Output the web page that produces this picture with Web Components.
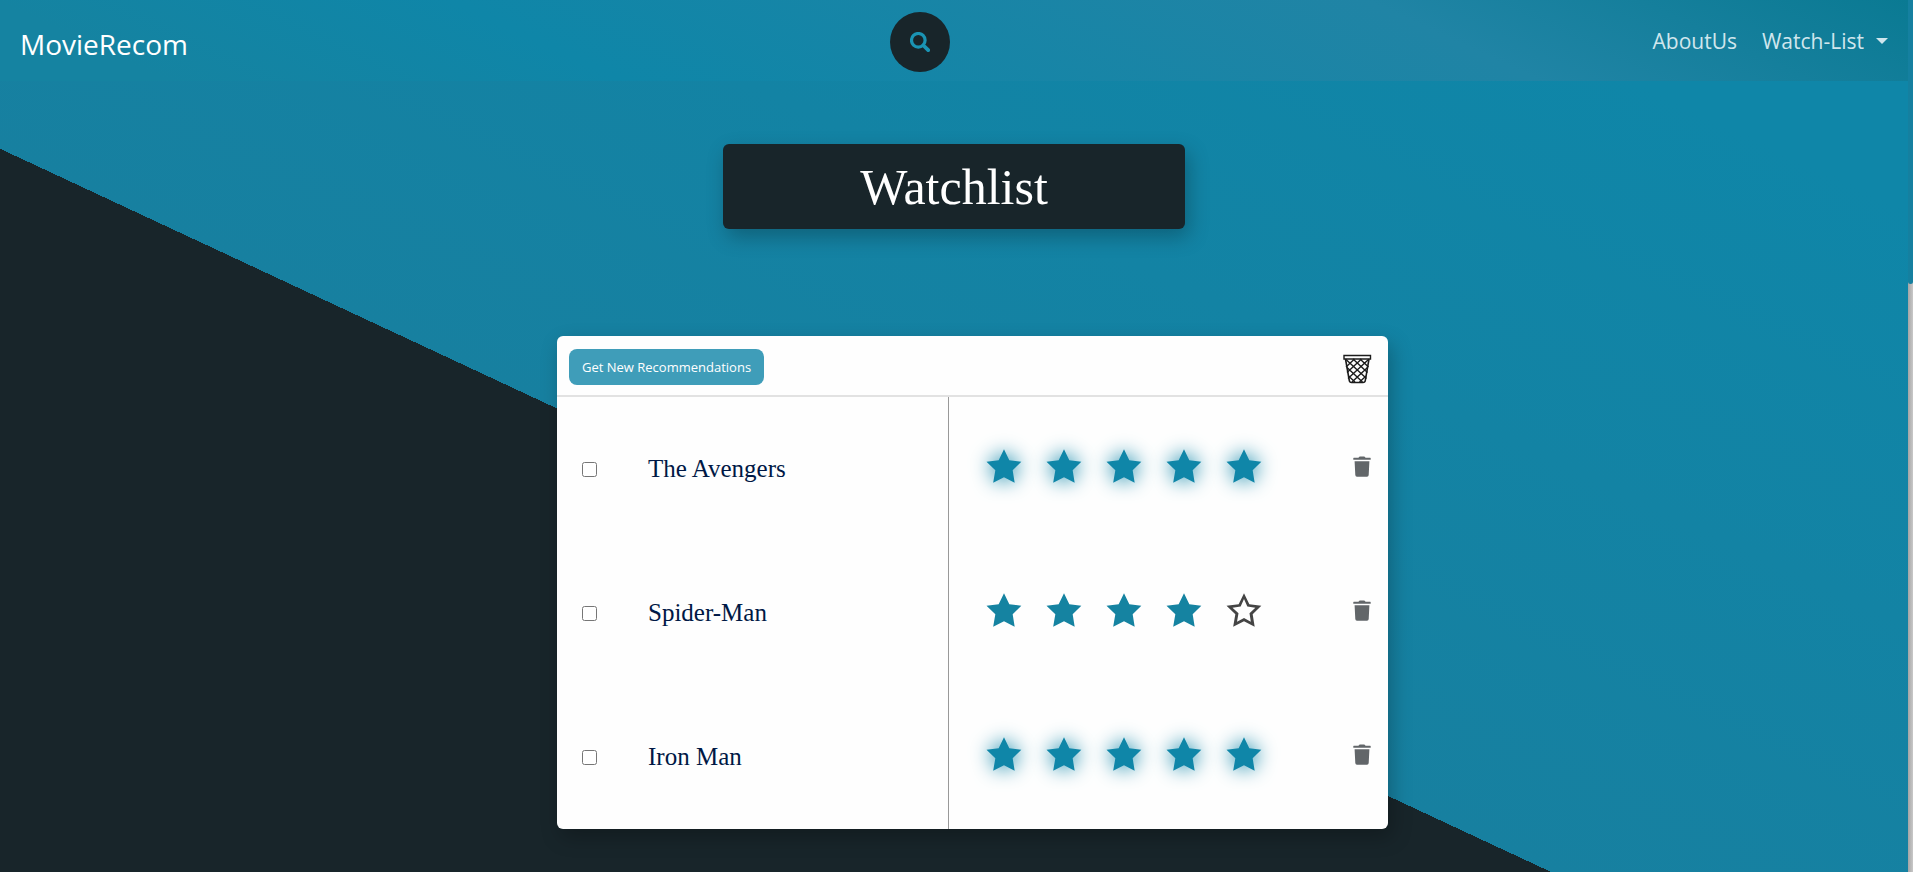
<!DOCTYPE html>
<html lang="en">
<head>
<meta charset="utf-8">
<meta name="viewport" content="width=device-width, initial-scale=1">
<title>MovieRecom - Watchlist</title>
<style>
  html, body { margin: 0; height: 100%; }
  body { font-family: "Open Sans", "Noto Sans", sans-serif; overflow: hidden; }
</style>
</head>
<body>
<movie-app>
  <movie-nav slot="nav"></movie-nav>
  <page-title>Watchlist</page-title>
  <watch-card></watch-card>
</movie-app>

<script>
const define = (name, html, setup) => customElements.define(name, class extends HTMLElement {
  connectedCallback() {
    if (this.shadowRoot) return;
    const t = document.createElement('template');
    t.innerHTML = html;
    const root = this.attachShadow({ mode: 'open' });
    root.append(t.content.cloneNode(true));
    if (setup) setup(this, root);
  }
});

define('movie-app', `
<style>
  :host { display: grid; grid-template-columns: minmax(0, 1fr) 5px; height: 100vh;
    background: linear-gradient(25deg, #18252a 41%, #1780a0 41%, #0f86a8 88%, #0f86a8 100%); }
  .page { min-width: 0; }
  main { display: flex; flex-direction: column; align-items: center; gap: 107px; padding: 63px 20px 40px; }
  .track { background: linear-gradient(90deg, #a5a5a5, #c8c8c8); }
  .thumb { height: 284px; border-radius: 0 0 4px 4px; background: #1580a0; }
</style>
<div class="page">
  <slot name="nav"></slot>
  <main><slot></slot></main>
</div>
<div class="track"><div class="thumb"></div></div>`);

define('movie-nav', `
<style>
  :host { display: block; background: linear-gradient(25deg, #1583a1 0%, #1583a1 8%, #0f86a8 30%, #2084a5 74%, #0a7a93 100%); }
  nav { display: flex; justify-content: space-between; align-items: center; padding: 12px 20px 9px; }
  a { text-decoration: none; color: #fff; }
  .brand { font-size: 28px; line-height: 36px; padding-top: 4px; }
  .search { width: 60px; height: 60px; padding: 0; border: 0; border-radius: 50%; background: #18252a;
    display: grid; place-items: center; }
  .search svg { width: 20px; height: 20px; }
  .links { display: flex; gap: 25px; font-size: 21px; line-height: 32px; padding-bottom: 2px; }
  .links a { color: #d0e6ed; display: flex; align-items: center; gap: 12px; }
  .caret { border: 6px solid transparent; border-top-color: currentColor; border-bottom: 0; }
</style>
<nav>
  <a class="brand" href="#">MovieRecom</a>
  <button class="search" type="button" aria-label="Search">
    <svg viewBox="0 0 20 20" fill="none" stroke="#1a94b4"><circle cx="8.300" cy="8.300" r="6.800" stroke-width="3.200"/><path d="M13.500 13.500l4.700 4.700" stroke-width="3.800" stroke-linecap="round"/></svg>
  </button>
  <div class="links">
    <a href="#about">AboutUs</a>
    <a href="#watch-list">Watch-List<span class="caret"></span></a>
  </div>
</nav>`);

define('page-title', `
<style>
  :host { display: block; width: 100%; max-width: 462px; }
  h1 { margin: 0; padding: 14px 0 13px; border-radius: 6px; background: #18252a; color: #fff; text-align: center;
    font: 400 50px/58px "Liberation Serif", "Times New Roman", serif; box-shadow: 4px 8px 20px rgba(0, 0, 0, .25); }
</style>
<h1><slot></slot></h1>`);

const STAR = 'M53 1L69 33.500 105 38.500 79 64 85 101 53 84.500 20.500 101 27 64 .5 38.500 37 33.500Z';
const HOLE = 'M53 18L63 40.500 87 44 69.500 61 73.500 86 53 75 32 86 36.500 61 18.500 44 43 40.500Z';

define('star-rating', `
<style>
  :host { display: flex; gap: 24px; color: #1583a1; }
  :host([value="5"]) { color: #0f86a8; }
  button { padding: 0; border: 0; background: none; color: inherit; width: 36px; height: 34px; }
  svg { display: block; width: 36px; height: 34px; overflow: visible; }
  :host([value="5"]) svg { filter: drop-shadow(0 0 10px #0f86a8); }
  .empty { color: #444; }
</style>`, (host, root) => {
  const value = Number(host.getAttribute('value'));
  for (let i = 1; i <= 5; i++) {
    const b = document.createElement('button');
    b.type = 'button';
    b.setAttribute('aria-label', 'Rate ' + i);
    if (i > value) b.className = 'empty';
    b.innerHTML = `<svg viewBox="0 0 106 102" fill="currentColor" fill-rule="evenodd"><path d="${STAR}${i > value ? HOLE : ''}"/></svg>`;
    root.append(b);
  }
});

define('trash-button', `
<style>
  :host { display: block; }
  button { display: block; padding: 0; border: 0; background: none; }
  svg { display: block; width: 18px; height: 21px; }
</style>
<button type="button" aria-label="Remove movie">
  <svg viewBox="0 0 18 21" fill="#626669"><path d="M.8 1.700H5.500Q6 .4 7.200 .4H10.800Q12 .4 12.500 1.700H17.200Q17.700 1.700 17.700 2.300V3.700H.3V2.300Q.3 1.700 .8 1.700ZM1.600 5.200H16.400L15.700 19Q15.600 20.700 14 20.700H4Q2.400 20.700 2.300 19Z"/></svg>
</button>`);

define('watch-card', `
<style>
  :host { display: block; box-sizing: border-box; width: 100%; max-width: 868px; padding-left: 37px; }
  section { border-radius: 6px; overflow: hidden; background: #fefefe; }
  .shadow { border-radius: 6px; box-shadow: 4px 8px 20px rgba(0, 0, 0, .25); }
  header { display: flex; justify-content: space-between; align-items: center; height: 57px;
    padding: 2px 13px 0 12px; border-bottom: 2px solid #e2e2e2; }
  .new { font: 13px/20px "Open Sans", "Noto Sans", sans-serif; color: #fff; background: #3f9db9; border: 0;
    border-radius: 8px; padding: 8px 13px; }
  .clear { padding: 0; border: 0; background: none; }
  .clear svg { display: block; width: 36px; height: 36px; }
  table { width: 100%; border-collapse: collapse; table-layout: fixed; }
  td { padding: 0; height: 144px; vertical-align: middle; }
  .pick { width: 91px; }
  .pick input { display: block; width: 15px; height: 15px; margin: 0 0 0 25px; }
  .name { width: 300px; border-right: 1px solid #999; }
  .name label { font: 25px/30px "Liberation Serif", "Times New Roman", serif; color: #001845; }
  .stars { padding-left: 37px; }
  .remove { width: 35px; }
  .stars, .remove { height: 138px; padding-bottom: 6px; }
</style>
<div class="shadow"><section>
  <header>
    <button class="new" type="button">Get New Recommendations</button>
    <button class="clear" type="button" aria-label="Clear the watchlist">
      <svg viewBox="0 0 36 36" fill="none" stroke="#1c1c1c" stroke-width="1.400">
        <path d="M5 6.500H31.500V10H5Z"/>
        <path d="M6.500 10L10.300 31.500Q10.600 33.500 12.500 33.500H24Q26 33.500 26.300 31.500L30 10" stroke-width="1.600"/>
        <path d="M7 10.500L27.500 29.500M14 10L28.500 23.500M21 10L29.500 18M8 18.500L23.500 33M9.500 27L16 33M29.500 10.500L9 29.500M22.500 10L8 23.500M15.500 10L7 18M28.500 18.500L13 33M27 27L20.500 33"/>
      </svg>
    </button>
  </header>
  <table><tbody></tbody></table>
</section></div>`, (host, root) => {
  const movies = [['The Avengers', 5], ['Spider-Man', 4], ['Iron Man', 5]];
  root.querySelector('tbody').innerHTML = movies.map(([name, rating], i) => `
    <tr>
      <td class="pick"><input type="checkbox" id="m${i}"></td>
      <td class="name"><label for="m${i}">${name}</label></td>
      <td class="stars"><star-rating value="${rating}"></star-rating></td>
      <td class="remove"><trash-button></trash-button></td>
    </tr>`).join('');
});
</script>
</body>
</html>
